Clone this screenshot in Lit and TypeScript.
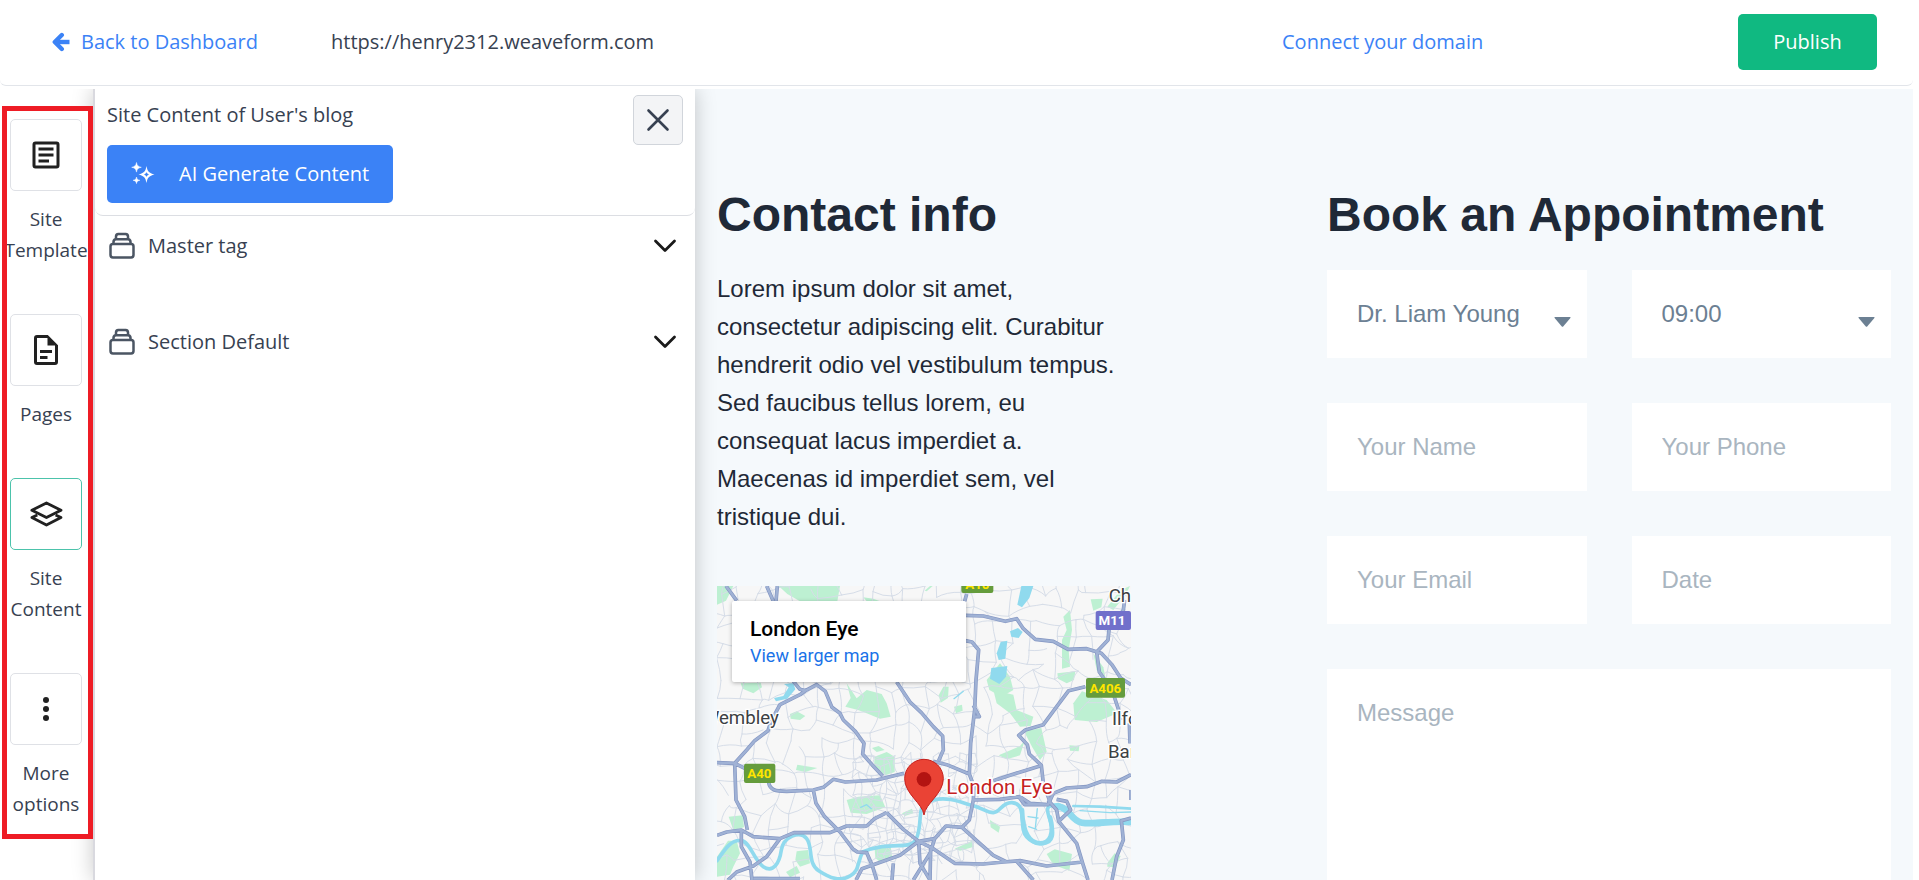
import { LitElement, html, css, svg, type SVGTemplateResult } from "lit";
import { customElement, property, state } from "lit/decorators.js";
import { classMap } from "lit/directives/class-map.js";

interface NavItem {
  id: string;
  lines: string[];
  icon: SVGTemplateResult;
}

const navItems: NavItem[] = [
  {
    id: "template",
    lines: ["Site", "Template"],
    icon: svg`<path fill-rule="evenodd" d="M5 3h14a2 2 0 0 1 2 2v14a2 2 0 0 1-2 2H5a2 2 0 0 1-2-2V5a2 2 0 0 1 2-2zm0 2v14h14V5zM7 7h10v2H7zm0 4h10v2H7zm0 4h7v2H7z"/>`,
  },
  {
    id: "pages",
    lines: ["Pages"],
    icon: svg`<path fill-rule="evenodd" d="M13.2 2H6a2 2 0 0 0-2 2v16a2 2 0 0 0 2 2h12a2 2 0 0 0 2-2V8.800zM6 4h7v5h5v11H6zM8 12h8v2H8zm0 4h5v2H8z"/>`,
  },
  {
    id: "content",
    lines: ["Site", "Content"],
    icon: svg`<g fill="none" stroke="currentColor" stroke-width="1.9" stroke-linejoin="round"><path d="M12.3 4.600 22 9.500l-9.700 4.900L2.600 9.500z"/><path d="M6.200 12.600 2.600 14.400l9.700 4.900L22 14.400l-3.600-1.800"/></g>`,
  },
  {
    id: "more",
    lines: ["More", "options"],
    icon: svg`<circle cx="12" cy="6" r="2"/><circle cx="12" cy="12" r="2"/><circle cx="12" cy="18" r="2"/>`,
  },
];

/* ---------- map geometry ---------- */

const parks = [
  "M51 48H100L78 92 51 104z",
  "M236 48H420L412 94H300L262 72z",
  "M440 340 470 385 500 360 545 372 560 400 572 440 540 446 500 430 474 420 436 410 452 384z",
  "M122 340 182 338 186 352 160 370 128 356z",
  "M270 432 290 424 316 438 300 450 272 446z",
  "M524 560 560 546 584 560 584 606 556 616 522 590z",
  "M516 534 536 528 554 540 530 546z",
  "M292 584 352 594 316 606 288 600z",
  "M440 690 476 680 540 676 556 712 500 732 452 728z",
  "M606 730 636 716 640 730 614 738z",
  "M86 740 128 736 132 772 100 780z",
  "M51 860 84 812 110 812 120 850 100 890 90 914 51 920z",
  "M290 844 324 840 330 880 300 890 286 870z",
  "M258 906 290 888 300 908 270 922z",
  "M524 836 572 828 576 860 540 876 526 864z",
  "M764 836 816 812 822 830 780 842z",
  "M870 750 900 770 896 788 872 772z",
  "M1040 852 1064 838 1116 852 1108 902 1060 884z",
  "M1222 880 1244 850 1262 858 1246 892 1222 890z",
  "M716 376 730 350 746 350 744 384 722 398z",
  "M762 410 786 404 788 422 768 430z",
  "M860 330 900 280 930 320 940 360 905 380 868 360z",
  "M880 360 940 374 950 420 1000 440 992 468 960 470 930 430 890 400z",
  "M972 484 1024 474 1040 545 1020 570 996 530z",
  "M896 556 960 528 974 512 960 556 920 568z",
  "M1072 310 1126 304 1122 330 1100 340 1074 326z",
  "M1086 210 1100 180 1090 140 1110 120 1116 180 1106 240 1110 290 1086 296z",
  "M1172 88 1208 86 1204 112 1180 122z",
  "M1222 110 1262 60 1290 48 1276 76 1240 120z",
  "M1120 400 1146 364 1220 390 1252 430 1190 456 1124 450z",
  "M1108 526 1138 528 1136 544 1110 542z",
  "M1180 250 1210 292 1216 320 1190 300z",
  "M674 62 690 48H698L680 64z",
  "M490 82 520 86 540 94H500z",
];

const lakes = [
  "M964 48H1000L988 84 966 112 952 104z",
  "M930 184 954 174 968 186 956 204 934 200z",
  "M902 216 922 212 916 266 896 270 890 250z",
  "M874 294 922 288 918 320 898 342 870 326z",
  "M222 384 250 378 266 352 252 342 280 340 286 358 262 386 228 394z",
];

const rivers: Array<[string, number]> = [
  ["M51 872C80 830 96 808 124 812S160 870 190 890 238 880 244 840 300 780 320 806 322 880 356 902 420 936 450 918 470 880 488 846C540 824 580 828 612 826S652 812 658 770 654 700 700 690 780 696 816 706 860 728 880 728 906 696 936 698 966 726 968 766 1000 822 1030 820 1064 790 1050 750 1040 706 1076 704C1110 712 1106 752 1140 756S1220 746 1293 756", 11],
  ["M1076 710C1110 714 1112 752 1146 758S1230 752 1293 756", 20],
  ["M966 720C968 790 990 820 1020 820S1064 792 1050 742", 14],
  ["M1120 708 1200 710 1293 716", 8],
  ["M1140 722 1230 728 1293 726", 4],
  ["M1012 716 1006 774M984 740 1014 744M986 770 1010 778", 4],
  ["M514 716 500 704 482 712M762 386 790 364", 4],
];

const highways: string[] = [
  "M51 578 104 580 136 596M104 580 140 540 164 512 204 482 214 452 240 404 300 374 316 362 350 344 376 364 396 412 420 430 430 450 466 484 492 520 488 552 516 584 548 618",
  "M280 334 300 358 318 362M104 580 108 690 134 740 142 780",
  "M206 638C210 660 226 664 260 664L340 660 370 652 400 628 436 636 530 630 612 610",
  "M340 660 348 700 374 740 420 786 458 836 472 846 500 848 516 884 530 930",
  "M51 796 80 786 124 780 160 800 240 806 282 788 390 788 440 768 500 768 524 746 560 728",
  "M124 780 124 830 150 876 156 930",
  "M590 336 630 396 664 428 700 470 728 498 730 540 716 572",
  "M700 574 740 584 808 612 822 650 820 690 808 750 786 772",
  "M808 612 812 520 824 420 828 330 836 240 816 216 796 212M820 406 838 440 818 440",
  "M796 136 850 138 916 154 950 146 970 176 1006 208 1060 214 1104 238 1160 236 1204 250 1236 284 1262 324 1293 344",
  "M1190 246 1198 306 1236 360 1256 420 1262 450M1190 246 1224 210 1228 170",
  "M1240 160 1270 120 1274 90",
  "M1156 350 1106 362 1070 410 1030 464 976 480 956 496 982 524 988 552 1024 586 1030 640 1048 690",
  "M880 632 930 616 974 602 1020 588",
  "M820 690 900 688 960 680 990 700 1044 704 1060 670 1100 654 1160 650 1206 634 1250 636 1293 614",
  "M1044 690 1070 720 1076 754 1130 820 1148 880 1164 930",
  "M1070 688 1100 694 1112 720 1076 754M956 680 974 704 1040 704",
  "M560 728 610 778 656 814 700 836 764 880 850 882 910 876 960 872 1040 888 1148 876",
  "M786 772 738 768 704 806 656 814 600 856 520 884 486 896 468 930",
  "M786 772 830 812 880 856 920 876M950 874 1000 930",
  "M656 814 660 880 690 930M704 806 690 850 640 930M692 836 690 930M580 880 576 930",
  "M1293 744 1264 752 1270 810 1250 860 1236 930M1293 660V690",
  "M1288 460 1290 520",
  "M240 806 200 860 160 888 110 906 84 930M160 926H300",
  "M78 48 110 92M200 48 220 94M232 48 228 94M800 72 794 94",
];

/** Repeatable jittered street grid, joined with soft bends. */
function streetGrid(x0: number, y0: number, x1: number, y1: number, cell: number, start: number): string {
  let seed = start;
  const next = () => {
    seed = (seed * 1103515245 + 12345) % 2147483648;
    return seed / 2147483648;
  };
  const cols = Math.ceil((x1 - x0) / cell) + 1;
  const rows = Math.ceil((y1 - y0) / cell) + 1;
  const pt: number[][][] = [];
  for (let r = 0; r < rows; r++) {
    pt.push([]);
    for (let c = 0; c < cols; c++) {
      pt[r].push([
        Math.round(x0 + c * cell + (next() - 0.5) * cell * 0.9),
        Math.round(y0 + r * cell + (next() - 0.5) * cell * 0.9),
      ]);
    }
  }
  let d = "";
  const join = ([ax, ay]: number[], [bx, by]: number[]) => {
    const mx = Math.round((ax + bx) / 2 + (next() - 0.5) * cell * 0.4);
    const my = Math.round((ay + by) / 2 + (next() - 0.5) * cell * 0.4);
    d += `M${ax} ${ay}Q${mx} ${my} ${bx} ${by}`;
  };
  for (let r = 0; r < rows; r++) {
    for (let c = 0; c < cols; c++) {
      if (c + 1 < cols && next() > 0.2) join(pt[r][c], pt[r][c + 1]);
      if (r + 1 < rows && next() > 0.2) join(pt[r][c], pt[r + 1][c]);
    }
  }
  return d;
}

const streets = streetGrid(20, 20, 1320, 1000, 50, 7);
const cityStreets = streetGrid(460, 560, 820, 860, 26, 31);

@customElement("london-map")
export class LondonMap extends LitElement {
  static styles = css`
    :host { display: block; position: relative; overflow: hidden; background: #f7f7f7; font-family: Roboto, sans-serif; }
    .canvas { display: block; width: 100%; height: 100%; }
    .card {
      position: absolute; top: 15px; left: 15px; box-sizing: border-box; width: 234px; padding: 14px 18px 13px;
      display: flex; flex-direction: column; background: #fff; border-radius: 2px;
      box-shadow: 0 1px 4px rgba(0, 0, 0, 0.3);
    }
    .name { font-size: 21px; line-height: 28px; font-weight: 500; color: #000; }
    .more { font-size: 18px; line-height: 26px; color: #1a73e8; text-decoration: none; }
    .park { fill: #bdf0d2; }
    .water { fill: #90daee; }
    .river { fill: none; stroke: #90daee; stroke-linecap: round; stroke-linejoin: round; }
    .street { fill: none; stroke: #d6dde8; stroke-width: 3; stroke-linecap: round; }
    .casing { fill: none; stroke: #8496c2; stroke-width: 11; stroke-linejoin: round; }
    .road { fill: none; stroke: #a0b2d5; stroke-width: 7; stroke-linejoin: round; }
    .town { font-size: 56px; fill: #3c4043; stroke: #fff; stroke-width: 8; paint-order: stroke; }
    .place { font-size: 62px; fill: #c5221f; stroke: #fff; stroke-width: 10; paint-order: stroke; }
    .shield { font-size: 40px; font-weight: 700; fill: #ffe500; text-anchor: middle; }
    .motorway { fill: #fff; }
  `;

  render() {
    return html`
      <svg class="canvas" viewBox="51 48 1242 882" preserveAspectRatio="xMinYMin slice" role="img" aria-label="Map of London">
        ${parks.map((d) => svg`<path class="park" d=${d} />`)}
        <path class="street" d=${streets} />
        <path class="street" d=${cityStreets} />
        ${lakes.map((d) => svg`<path class="water" d=${d} />`)}
        ${rivers.map(([d, w]) => svg`<path class="river" d=${d} stroke-width=${w} />`)}
        <path class="casing" d=${highways.join("")} />
        <path class="road" d=${highways.join("")} />
        <rect x="784" y="20" width="96" height="49" rx="6" fill="#659c3c" />
        <text class="shield" x="832" y="56">A10</text>
        <rect x="1187" y="123" width="106" height="57" rx="6" fill="#7170cb" />
        <text class="shield motorway" x="1236" y="166">M11</text>
        <rect x="1158" y="324" width="117" height="59" rx="6" fill="#659c3c" />
        <text class="shield" x="1216" y="369">A406</text>
        <rect x="132" y="581" width="94" height="58" rx="6" fill="#659c3c" />
        <text class="shield" x="178" y="625">A40</text>
        <text class="town" x="8" y="461">Wembley</text>
        <text class="town" x="1226" y="96">Chigwell</text>
        <text class="town" x="1236" y="465">Ilford</text>
        <text class="town" x="1224" y="563">Barking</text>
        <text class="place" x="739" y="673">London Eye</text>
        <path d="M672 735C668 700 614 672 614 626a58 58 0 0 1 116 0C730 672 676 700 672 735z" fill="#ea4335" stroke="#c5221f" stroke-width="3" />
        <circle cx="672" cy="628" r="22" fill="#b31412" />
      </svg>
      <div class="card">
        <span class="name">London Eye</span>
        <a class="more" href="#map">View larger map</a>
      </div>
    `;
  }
}

@customElement("side-nav")
export class SideNav extends LitElement {
  @property() active = "content";

  static styles = css`
    :host { display: block; }
    .frame {
      box-sizing: border-box; width: 91px; margin: 17px 0 0 2px; padding: 8px 3px 14px 0; overflow: hidden;
      display: flex; flex-direction: column; gap: 48px; border: 5px solid #ee1c25; background: #fff;
    }
    .item {
      display: flex; flex-direction: column; align-items: center; gap: 13px; padding: 0; border: 0;
      background: none; font: inherit; font-size: 19px; line-height: 31px; color: #374151; cursor: pointer;
    }
    .box {
      box-sizing: border-box; width: 72px; height: 72px; display: grid; place-items: center;
      border: 1px solid #dfe1e6; border-radius: 5px; color: #212121;
    }
    .on { border-color: #4cc3ab; }
    .icon { width: 36px; height: 36px; fill: currentColor; }
    .label { display: flex; flex-direction: column; align-items: center; white-space: nowrap; }
  `;

  render() {
    return html`<nav class="frame" aria-label="Site editor">
      ${navItems.map(
        (item) => html`<button class="item" type="button" @click=${() => (this.active = item.id)}>
          <span class=${classMap({ box: true, on: item.id === this.active })}>
            <svg class="icon" viewBox="0 0 24 24" aria-hidden="true">${item.icon}</svg>
          </span>
          <span class="label">${item.lines.map((line) => html`<span>${line}</span>`)}</span>
        </button>`
      )}
    </nav>`;
  }
}

@customElement("content-panel")
export class ContentPanel extends LitElement {
  @state() private open = "";

  static styles = css`
    :host { display: block; }
    .head {
      display: flex; justify-content: space-between; align-items: flex-start; padding: 6px 12px 12px;
      border-bottom: 1px solid #dcdee3; border-radius: 0 0 8px 8px;
    }
    .title { margin: 4px 0 15px; font-size: 20px; line-height: 31px; font-weight: 400; color: #374151; }
    .generate {
      display: flex; align-items: center; gap: 24px; height: 58px; padding: 0 24px; border: 0; border-radius: 5px;
      background: #3b82f6; color: #fff; font: inherit; cursor: pointer;
    }
    .sparkle { width: 24px; height: 24px; }
    .close {
      box-sizing: border-box; width: 50px; height: 50px; display: grid; place-items: center; padding: 0;
      border: 1px solid #d1d5db; border-radius: 5px; background: #f3f4f6; color: #374151; cursor: pointer;
    }
    .cross { width: 24px; height: 24px; }
    .rows { display: flex; flex-direction: column; gap: 36px; }
    .row {
      display: flex; align-items: center; gap: 13px; height: 60px; padding: 0 18px 0 14px; border: 0;
      background: none; font: inherit; color: #374151; text-align: left; cursor: pointer;
    }
    .stack { width: 26px; height: 28px; color: #4b5563; }
    .text { flex: 1; }
    .chevron { width: 24px; height: 14px; color: #1a1a1a; }
  `;

  render() {
    return html`
      <header class="head">
        <div>
          <h2 class="title">Site Content of User's blog</h2>
          <button class="generate" type="button">
            <svg class="sparkle" viewBox="0 0 24 24" fill="#fff" aria-hidden="true">
              <path fill-rule="evenodd" d="M15.500 4c1 5.400 2.400 7 8 8.500-5.600 1.500-7 3.100-8 8.500-1-5.400-2.400-7-8-8.500 5.600-1.500 7-3.100 8-8.500zm0 6c-.5 1.400-1.100 2-2.500 2.500 1.400.5 2 1.100 2.500 2.500.5-1.400 1.100-2 2.500-2.500-1.400-.5-2-1.100-2.500-2.500z"/>
              <path d="M5.500.5c.6 3.200 1.600 4.100 4.800 4.800-3.200.7-4.200 1.600-4.800 4.800-.6-3.200-1.600-4.100-4.800-4.800 3.200-.7 4.200-1.600 4.800-4.800zM5.500 15c.4 2.200 1.200 2.900 3.400 3.300-2.200.4-3 1.100-3.400 3.300-.4-2.200-1.200-2.900-3.400-3.300 2.200-.4 3-1.100 3.400-3.300z" stroke="#fff" stroke-width=".5"/>
            </svg>
            AI Generate Content
          </button>
        </div>
        <button class="close" type="button" aria-label="Close">
          <svg class="cross" viewBox="0 0 24 24" fill="none" stroke="currentColor" stroke-width="2.600" stroke-linecap="round" aria-hidden="true">
            <path d="M2.500 2.500l19 19M21.500 2.500l-19 19"/>
          </svg>
        </button>
      </header>
      <div class="rows">
        ${["Master tag", "Section Default"].map(
          (name) => html`<button class="row" type="button" aria-expanded=${this.open === name} @click=${() => (this.open = name)}>
            <svg class="stack" viewBox="0 0 26 28" fill="none" stroke="currentColor" stroke-width="2.500" stroke-linejoin="round" aria-hidden="true">
              <rect x="1.500" y="12" width="23" height="13.500" rx="2.400"/>
              <path d="M4.500 12V10a3 3 0 0 1 2-2.800h13a3 3 0 0 1 2 2.800v2M7 7.200V4.600a2.600 2.600 0 0 1 2.400-2.600h7.200A2.600 2.600 0 0 1 19 4.600v2.600"/>
            </svg>
            <span class="text">${name}</span>
            <svg class="chevron" viewBox="0 0 24 14" fill="none" stroke="currentColor" stroke-width="2.800" stroke-linecap="round" stroke-linejoin="round" aria-hidden="true">
              <path d="M2.500 2 12 11.500 21.500 2"/>
            </svg>
          </button>`
        )}
      </div>
    `;
  }
}

@customElement("site-preview")
export class SitePreview extends LitElement {
  static styles = css`
    :host {
      box-sizing: border-box; display: grid; grid-template-columns: 1fr 1fr; gap: 46px; padding: 97px 22px 0;
      background: #f5f9fc; color: #1f2937; font-family: "Liberation Sans", Arial, sans-serif; font-size: 24px;
    }
    .contact { display: flex; flex-direction: column; max-width: 414px; min-height: 0; }
    .heading { margin: 0 0 26px; font-size: 48px; line-height: 58px; font-weight: 700; }
    .intro { margin: 0 0 50px; line-height: 38px; }
    .map { flex: 1; min-height: 294px; }
    .booking { display: flex; flex-direction: column; min-height: 0; }
    .form {
      flex: 1; display: grid; grid-template-columns: 1fr 1fr; grid-template-rows: 88px 88px 88px 1fr; gap: 45px;
    }
    .field { position: relative; display: grid; min-width: 0; }
    .wide { grid-column: 1 / -1; }
    .input {
      box-sizing: border-box; width: 100%; min-width: 0; padding: 30px; border: 0; border-radius: 0; background: #fff;
      color: #6c8093; font: inherit; line-height: 28px; appearance: none; resize: none; outline: none;
    }
    .input::placeholder { color: #a9b5c0; opacity: 1; }
    .select { padding-top: 0; padding-bottom: 0; }
    .caret { position: absolute; right: 16px; top: 47px; width: 17px; height: 10px; fill: #6c8093; pointer-events: none; }
  `;

  private select(label: string, options: string[]) {
    return html`<label class="field">
      <select class="input select" aria-label=${label}>${options.map((o) => html`<option>${o}</option>`)}</select>
      <svg class="caret" viewBox="0 0 17 10" aria-hidden="true"><path d="M1 0h15q1 0 .4 1L9.200 9.400q-.7.8-1.400 0L.6 1Q0 0 1 0z"/></svg>
    </label>`;
  }

  private text(label: string, type = "text") {
    return html`<label class="field"><input class="input" type=${type} placeholder=${label} aria-label=${label} /></label>`;
  }

  render() {
    return html`
      <section class="contact">
        <h1 class="heading">Contact info</h1>
        <p class="intro">
          Lorem ipsum dolor sit amet, consectetur adipiscing elit. Curabitur hendrerit odio vel vestibulum tempus. Sed
          faucibus tellus lorem, eu consequat lacus imperdiet a. Maecenas id imperdiet sem, vel tristique dui.
        </p>
        <london-map class="map"></london-map>
      </section>
      <section class="booking">
        <h1 class="heading">Book an Appointment</h1>
        <form class="form">
          ${this.select("Doctor", ["Dr. Liam Young"])} ${this.select("Time", ["09:00"])}
          ${this.text("Your Name")} ${this.text("Your Phone", "tel")}
          ${this.text("Your Email", "email")} ${this.text("Date")}
          <label class="field wide"><textarea class="input" placeholder="Message" aria-label="Message"></textarea></label>
        </form>
      </section>
    `;
  }
}

@customElement("app-root")
export class AppRoot extends LitElement {
  static styles = css`
    :host {
      box-sizing: border-box; display: flex; flex-direction: column; gap: 3px; height: 100vh; overflow: hidden;
      padding-right: 6px; background: #fff; color: #374151; font-family: "Open Sans", "Noto Sans", sans-serif;
      font-size: 20px; line-height: 30px;
    }
    .bar {
      display: grid; grid-template-columns: 279px 1fr 456px 139px; align-items: center; padding: 14px 36px 15px 52px;
      border-bottom: 1px solid #e2e5ea; border-radius: 0 0 6px 6px;
    }
    .link { display: inline-flex; align-items: center; gap: 11px; color: #3b82f6; text-decoration: none; }
    .arrow { width: 18px; height: 20px; }
    .publish { height: 56px; border: 0; border-radius: 5px; background: #10b981; color: #fff; font: inherit; cursor: pointer; }
    .body { flex: 1; display: grid; grid-template-columns: 93px 602px 1fr; min-height: 0; overflow: hidden; }
    .nav { position: relative; z-index: 2; }
    .panel {
      position: relative; z-index: 1; border-left: 2px solid #d9d9df; background: #fff;
      box-shadow: 0 0 20px rgba(0, 0, 0, 0.22);
    }
  `;

  render() {
    return html`
      <header class="bar">
        <a class="link" href="#dashboard">
          <svg class="arrow" viewBox="0 0 18 20" fill="none" stroke="currentColor" stroke-width="4.400" stroke-linejoin="round" aria-hidden="true">
            <path d="M3 10H17.500"/><path d="M9.800 3 2.800 10l7 7" stroke-linecap="round"/>
          </svg>
          Back to Dashboard
        </a>
        <span>https://henry2312.weaveform.com</span>
        <a class="link" href="#domain">Connect your domain</a>
        <button class="publish" type="button">Publish</button>
      </header>
      <main class="body">
        <side-nav class="nav"></side-nav>
        <content-panel class="panel"></content-panel>
        <site-preview></site-preview>
      </main>
    `;
  }
}
